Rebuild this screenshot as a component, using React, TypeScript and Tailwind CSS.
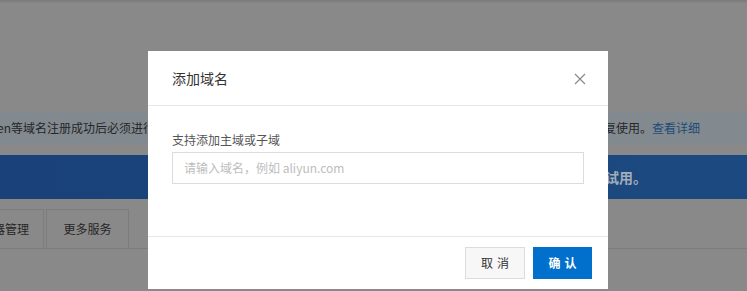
import React from "react";

export default function App() {
  const font = { fontFamily: '"Noto Sans CJK SC", "Noto Sans", sans-serif' };
  return (
    <div
      className="relative w-[747px] h-[291px] overflow-hidden bg-[#898989]"
      style={font}
    >
      <div className="h-[3px] bg-gradient-to-b from-[#7a7a7a] to-[#878787]" />
      {/* notice bar */}
      <div className="mt-[108px] h-[33px] bg-[#828a90] flex items-center justify-between text-[12px] text-[#262626] pr-[47px]">
        <span className="ml-[-3px] whitespace-nowrap">en等域名注册成功后必须进行实名认证，否则将无法正常解析</span>
        <span className="whitespace-nowrap">
          恢复使用。<span className="text-[#1d4a78]">查看详细</span>
        </span>
      </div>
      {/* blue banner */}
      <div className="mt-[11px] h-[44px] bg-gradient-to-r from-[#1a4179] to-[#1c4a80] flex items-center justify-end pr-[100px] text-[14px] font-bold text-[#a3adb9]">
        <span className="whitespace-nowrap">立即免费试用。</span>
      </div>
      {/* tabs */}
      <div className="mt-[10px] h-[40px] border-b border-[#7c7c7c] flex items-end gap-[2px] text-[12px] text-[#262626]">
        <div className="h-[39px] w-[44px] border border-b-0 border-[#7c7c7c] border-l-0 flex items-center justify-end pr-[14px] overflow-hidden">
          <span className="whitespace-nowrap">器管理</span>
        </div>
        <div className="h-[39px] w-[83px] border border-b-0 border-[#7c7c7c] flex items-center justify-center">
          更多服务
        </div>
      </div>

      {/* modal */}
      <div className="absolute left-[148px] top-[51px] w-[460px] h-[238px] bg-white flex flex-col">
        <div className="h-[55px] border-b border-[#e8e8e8] flex items-center justify-between pl-[24px] pr-[22px]">
          <span className="text-[14px] text-[#333]">添加域名</span>
          <svg width="12" height="12" viewBox="0 0 12 12" className="mt-[1px]">
            <path d="M1 1 L11 11 M11 1 L1 11" stroke="#8a8a8a" strokeWidth="1.2" fill="none" />
          </svg>
        </div>
        <div className="h-[131px] px-[24px] pt-[24px] border-b border-[#e3e8ee]">
          <div className="h-[20px] leading-[20px] text-[12px] text-[#555]">支持添加主域或子域</div>
          <div className="mt-[2px] h-[32px] border border-[#dcdcdc] flex items-center px-[11px] text-[12px] text-[#bdbdbd]">
            请输入域名，例如 aliyun.com
          </div>
        </div>
        <div className="flex-1 flex items-start justify-end gap-[8px] pt-[10px] pr-[16px]">
          <button className="w-[60px] h-[32px] border border-[#dcdcdc] bg-[#f7f7f7] text-[12px] text-[#333] tracking-[4px] pl-[4px]">
            取消
          </button>
          <button className="w-[59px] h-[32px] bg-[#0070cc] text-[12px] text-white font-bold tracking-[4px] pl-[4px]">
            确认
          </button>
        </div>
      </div>
    </div>
  );
}
